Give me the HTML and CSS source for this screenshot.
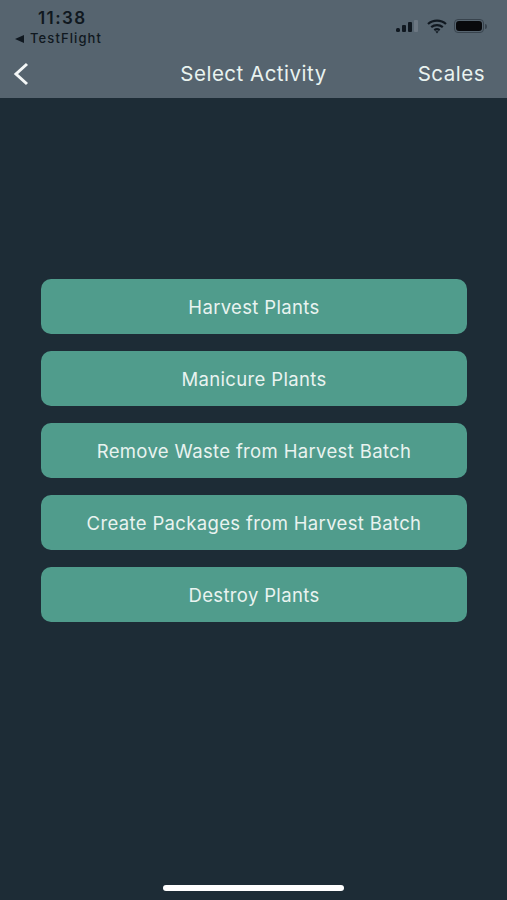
FILE: index.html
```html
<!DOCTYPE html>
<html lang="en">
<head>
    <meta charset="UTF-8">
    <meta name="viewport" content="width=device-width, initial-scale=1.0">
    <title>Select Activity</title>
    <link rel="stylesheet" href="styles.css">
</head>
<body>
    <div class="screen">
        <div class="header">
            <div class="status-bar">
                <div class="status-left">
                    <div class="clock">11:38</div>
                    <div class="return-app"><span class="return-arrow"></span>TestFlight</div>
                </div>
                <div class="status-right">
                    <svg class="signal" width="22" height="13" viewBox="0 0 22 13">
                        <rect x="0" y="8" width="4" height="4" rx="1.5" fill="#101820"/>
                        <rect x="6" y="5" width="4" height="7" rx="1" fill="#101820"/>
                        <rect x="12" y="2" width="4" height="10" rx="1" fill="#101820"/>
                        <rect x="18" y="0" width="4" height="12" rx="1" fill="#6c7782"/>
                    </svg>
                    <svg class="wifi" width="20" height="15" viewBox="0 0 20 15" fill="none" stroke="#101820" stroke-width="2.2">
                        <path d="M1 5 C6 0.5 14 0.5 19 5"/>
                        <path d="M4.2 8.2 C7.5 5.4 12.5 5.4 15.8 8.2"/>
                        <path d="M7.3 11.2 C8.9 10 11.1 10 12.7 11.2"/>
                        <path d="M10 14.5 L8.4 12.6 C9.4 12 10.6 12 11.6 12.6 Z" fill="#101820" stroke="none"/>
                    </svg>
                    <div class="battery"><div class="battery-fill"></div></div>
                    <div class="battery-tip"></div>
                </div>
            </div>
            <div class="nav-bar">
                <svg class="back" width="18" height="24" viewBox="0 0 18 24" fill="none" stroke="#f4f7f7" stroke-width="3">
                    <path d="M15 2 L4 12 L15 22"/>
                </svg>
                <div class="nav-title">Select Activity</div>
                <div class="nav-action">Scales</div>
            </div>
        </div>

        <div class="content">
            <div class="activity-list">
                <button class="activity-button">Harvest Plants</button>
                <button class="activity-button">Manicure Plants</button>
                <button class="activity-button">Remove Waste from Harvest Batch</button>
                <button class="activity-button">Create Packages from Harvest Batch</button>
                <button class="activity-button">Destroy Plants</button>
            </div>
        </div>

        <div class="home-area">
            <div class="home-indicator"></div>
        </div>
    </div>
</body>
</html>
```

FILE: styles.css
```css
/* Define color palette */
:root {
    --header: #56646f;
    --background: #1d2c36;
    --teal: #509c8c;
    --text: #e9f3f0;
    --status: #101820;
}

html, body {
    margin: 0;
    padding: 0;
}

body {
    background-color: var(--background);
    font-family: 'Inter', 'Liberation Sans', sans-serif;
}

.screen {
    width: 507px;
    height: 900px;
    display: flex;
    flex-direction: column;
    overflow: hidden;
}

.header {
    height: 98px;
    flex-shrink: 0;
    background-color: var(--header);
}

.status-bar {
    height: 48px;
    display: flex;
    justify-content: space-between;
    padding: 9px 20px 0 15px;
    box-sizing: border-box;
    color: var(--status);
}

.clock {
    font-size: 17px;
    font-weight: 600;
    line-height: 18px;
    letter-spacing: 1.4px;
    margin-left: 23px;
}

.return-app {
    display: flex;
    align-items: center;
    gap: 6px;
    font-size: 13px;
    font-weight: 500;
    line-height: 15px;
    margin-top: 4px;
    letter-spacing: 1.1px;
}

.return-arrow {
    width: 0;
    height: 0;
    border-top: 4px solid transparent;
    border-bottom: 4px solid transparent;
    border-right: 9px solid var(--status);
}

.status-right {
    display: flex;
    align-items: center;
    height: 34px;
}

.signal {
    margin-right: 9px;
    margin-top: 1px;
}

.wifi {
    margin-right: 7px;
}

.battery {
    width: 26px;
    height: 10px;
    border: 1px solid #38434d;
    border-radius: 4px;
    padding: 1px;
    box-sizing: content-box;
}

.battery-fill {
    height: 100%;
    background-color: #08090c;
    border-radius: 3px;
}

.battery-tip {
    width: 2px;
    height: 5px;
    margin-left: 1px;
    background-color: #38434d;
    border-radius: 0 2px 2px 0;
}

.nav-bar {
    height: 50px;
    display: flex;
    align-items: center;
    justify-content: space-between;
    position: relative;
    padding: 0 22px 0 12px;
    color: var(--text);
    font-size: 20.5px;
}

.back {
    margin-top: 2px;
}

.nav-title {
    position: absolute;
    left: 0;
    right: 0;
    text-align: center;
    letter-spacing: 0.5px;
    margin-top: 1px;
}

.nav-action {
    letter-spacing: 0.5px;
    margin-top: 1px;
}

.content {
    flex: 1;
    padding: 181px 40px 0 41px;
}

.activity-list {
    display: flex;
    flex-direction: column;
    gap: 17px;
}

.activity-button {
    height: 55px;
    border: none;
    border-radius: 10px;
    background-color: var(--teal);
    color: var(--text);
    font-family: inherit;
    font-size: 18.5px;
    letter-spacing: 0.35px;
    cursor: pointer;
}

.home-area {
    height: 15px;
    flex-shrink: 0;
    display: flex;
    justify-content: center;
}

.home-indicator {
    width: 181px;
    height: 6px;
    background-color: #fff;
    border-radius: 3px;
}
```
